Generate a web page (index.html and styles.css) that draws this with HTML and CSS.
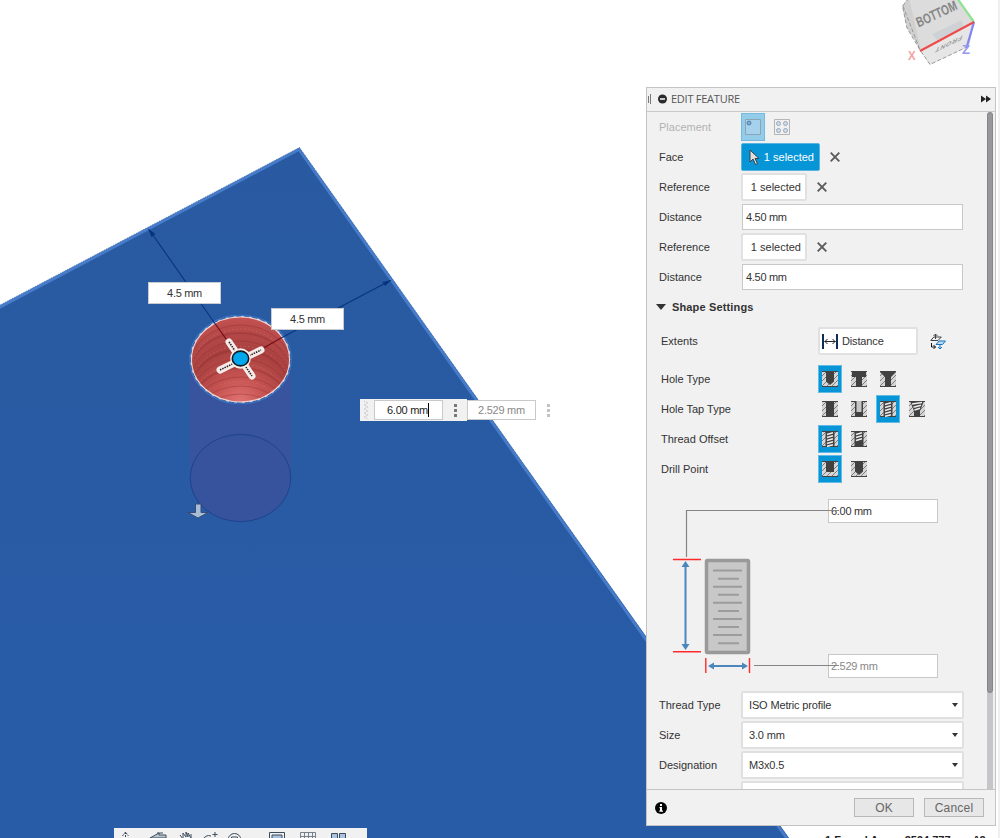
FILE: index.html
```html
<!DOCTYPE html>
<html lang="en">
<head>
<meta charset="utf-8">
<title>Edit Feature</title>
<link rel="stylesheet" href="styles.css">
</head>
<body>
<svg class="defs" width="0" height="0" aria-hidden="true">
  <defs>
    <pattern id="hatch" width="5" height="5" patternUnits="userSpaceOnUse">
      <rect width="5" height="5" fill="#d6d6d6"/>
      <path d="M-1 6 6-1M-1 1 1-1M4 6 6 4" stroke="#666" stroke-width=".8"/>
    </pattern>
    <symbol id="base" viewBox="0 0 16 16"><rect width="16" height="16" fill="url(#hatch)"/><path d="M0 .5h16M0 15.5h16" stroke="#444"/></symbol>
    <symbol id="simple" viewBox="0 0 16 16"><use href="#base"/><path d="M4 0h8v10.500L8 14 4 10.500z" fill="#414141"/></symbol>
    <symbol id="bore" viewBox="0 0 16 16"><use href="#base"/><path d="M1 0h14v6h-4v10H5V6H1z" fill="#414141"/></symbol>
    <symbol id="sink" viewBox="0 0 16 16"><use href="#base"/><path d="M0 0h16v1l-5 5v10H5V6L0 1z" fill="#414141"/></symbol>
    <symbol id="plain" viewBox="0 0 16 16"><use href="#base"/><path d="M4 0h8v16H4z" fill="#414141"/></symbol>
    <symbol id="clear" viewBox="0 0 16 16"><use href="#base"/><path d="M4 0h8v16H4z" fill="#414141"/><path d="M5.500 0h5v11h-5z" fill="#c6c6c6"/></symbol>
    <symbol id="tapped" viewBox="0 0 16 16"><use href="#base"/><path d="M3.500 0h9v16h-9z" fill="#414141"/><path d="M5 3.500 11 1.800M5 6.500 11 4.800M5 9.500 11 7.800M5 12.500 11 10.800M5 15.300 11 13.800" stroke="#eee" stroke-width="1.700"/></symbol>
    <symbol id="taper" viewBox="0 0 16 16"><use href="#base"/><path d="M1 0h14l-4 10v6H5v-6z" fill="#414141"/><path d="M3 3 13 1.500M4.500 6.200 12 4.200M5.500 9 11 7.200" stroke="#eee" stroke-width="1.600"/></symbol>
    <symbol id="offset" viewBox="0 0 16 16"><use href="#base"/><path d="M3.500 0h9v16h-9z" fill="#414141"/><path d="M5 3.500 11 1.800M5 6.500 11 4.800M5 9.500 11 7.800" stroke="#eee" stroke-width="1.700"/></symbol>
    <symbol id="flat" viewBox="0 0 16 16"><use href="#base"/><path d="M4 0h8v11H4z" fill="#414141"/></symbol>
    <symbol id="cross" viewBox="0 0 10 10"><path d="m.7.7 8.600 8.600M9.300.7.7 9.300" stroke="#5c5c5c" stroke-width="1.900"/></symbol>
    <radialGradient id="bowl" gradientUnits="userSpaceOnUse" cx="240" cy="402" r="92">
      <stop offset="0" stop-color="#e07372"/><stop offset=".28" stop-color="#c45250"/><stop offset=".58" stop-color="#a94140"/><stop offset=".8" stop-color="#b84a4a"/><stop offset="1" stop-color="#cb5858"/>
    </radialGradient>
    <linearGradient id="plate" x1="0" y1="0" x2="0" y2="1"><stop offset="0" stop-color="#295aa1"/><stop offset="1" stop-color="#285ca7"/></linearGradient>
    <clipPath id="mouth"><ellipse cx="240.500" cy="359.500" rx="48.500" ry="42"/></clipPath>
  </defs>
</svg>

<main class="viewport">
  <svg class="model" width="1000" height="838" viewBox="0 0 1000 838">
    <path d="M0 305.500 299.500 148 789 838H0z" fill="url(#plate)"/>
    <path d="M-2 308 299 149.500 788 840" fill="none" stroke="#467cca" stroke-width="3"/>
    <path d="M-2 306 299.500 147.500 790 840" fill="none" stroke="#315b98" stroke-width=".7" stroke-dasharray="1 1"/>
    <path d="M190 360h101v118a50.500 43.500 0 0 1-101 0z" fill="#39549e"/>
    <ellipse cx="240.500" cy="478" rx="50.300" ry="43.600" fill="#38539d" stroke="#1d438e"/>
    <ellipse cx="240.500" cy="359.500" rx="50.500" ry="44" fill="#285aa4" stroke="#3c79ca" stroke-width="1.500"/>
    <ellipse cx="240.500" cy="359.500" rx="49.200" ry="42.700" fill="url(#bowl)" stroke="#efd3d2" stroke-width="1.600"/>
    <ellipse cx="240.500" cy="359.500" rx="50" ry="43.500" fill="none" stroke="#1f4c93" stroke-width=".8" stroke-dasharray="5 3"/>
    <g clip-path="url(#mouth)" fill="none" stroke="#8d302f" stroke-opacity=".38">
      <ellipse cx="240.500" cy="368" rx="51" ry="43"/><ellipse cx="240.500" cy="376" rx="51" ry="43" stroke-width="2"/>
      <ellipse cx="240.500" cy="384" rx="51" ry="43"/><ellipse cx="240.500" cy="393" rx="51" ry="43" stroke-width="2"/>
      <ellipse cx="240.500" cy="402" rx="51" ry="43"/><ellipse cx="240.500" cy="411" rx="51" ry="43" stroke-width="2"/>
      <ellipse cx="240.500" cy="420" rx="51" ry="43"/><ellipse cx="240.500" cy="429" rx="51" ry="43"/><ellipse cx="240.500" cy="437" rx="51" ry="43"/>
      <g stroke="#e07b74" stroke-width=".7" stroke-dasharray="2 2" stroke-opacity=".6"><ellipse cx="240.500" cy="372" rx="49" ry="43"/><ellipse cx="240.500" cy="389" rx="49" ry="43"/><ellipse cx="240.500" cy="407" rx="49" ry="43"/><ellipse cx="240.500" cy="424" rx="49" ry="43"/></g>
    </g>
    <path d="M149 229.500 216 325M390.500 280.500 281 338" stroke="#0a347d" stroke-width="1.100"/>
    <path d="m216 325 13 18M281 338l-21 12" stroke="#740c19" stroke-width="1.200"/>
    <path d="m148 228.500 7.500 5.500-4 3zM391.500 280l-9 2 2.500 4z" fill="#06347e"/>
    <path d="m229 342 23 34M220 370l41-20" stroke="#f7ecea" stroke-width="7" stroke-linecap="round"/>
    <path d="m229 342 23 34M220 370l41-20" stroke="#222" stroke-width="1.600" stroke-dasharray="1.500 1"/>
    <circle cx="240.500" cy="358.500" r="10.300" fill="#f7ecea"/>
    <ellipse cx="240.500" cy="358.500" rx="8.200" ry="7.400" fill="#00a7ef" stroke="#161b20" stroke-width="1.600"/>
    <path d="M195.500 504h5.500v8.500h7L198 518l-10-5.500h7.500z" fill="#a9bdd7" stroke="#354d72" stroke-width="1"/>
  </svg>

  <div class="tag tag-left">4.5 mm</div>
  <div class="tag tag-right">4.5 mm</div>
  <div class="float-input">
    <span class="float-live"><svg width="5" height="20" viewBox="0 0 5 20"><path d="m0 1 4 2-4 2 4 2-4 2 4 2-4 2 4 2-4 2 4 2" fill="none" stroke="#bbb" stroke-dasharray="1 1"/></svg><span class="live-field">6.00 mm<i class="caret"></i></span><b class="dots"></b></span>
    <span class="idle-field">2.529 mm</span><b class="dots dots-idle"></b>
  </div>

  <svg class="viewcube" width="90" height="72" viewBox="895 0 90 72">
    <path d="M908-3 902.500 6l3 16.500 15 27.500 9.500 14.500L969 46l5-24L956-3z" fill="#dcdcdc"/>
    <path d="M902.500 6 909-2l12 52 9 14.500L907 28z" fill="#d0d0d0"/>
    <path d="M920 50 974 22l-5 24-39 18.500z" fill="#e6e6e6"/>
    <path d="m932 34 30-14 1 8-26 12z" fill="#cfd2d4"/>
    <path d="M909-2 902.500 6 907 28l13 22 10 14.500L969 46M903 6l17 44" fill="none" stroke="#999" stroke-dasharray="4 2"/>
    <text class="cube-face" transform="matrix(.9 -.42 .38 .92 918.500 27.500)" textLength="44" lengthAdjust="spacingAndGlyphs">BOTTOM</text>
    <text class="cube-front" transform="matrix(-.87 .43 .3 -.85 963 35)">FRONT</text>
    <path d="m957-2 17 24" stroke="#91e291" stroke-width="2.200"/>
    <path d="M974 22 966.500 48" stroke="#8383f1" stroke-width="2.200"/>
    <path d="m920 51 54-29" stroke="#ed4a4a" stroke-width="2"/>
    <text class="axis axis-x" x="908" y="60" textLength="7.500" lengthAdjust="spacingAndGlyphs">X</text>
    <text class="axis axis-z" x="962" y="54">Z</text>
  </svg>
  <div class="edge-strip"></div>

  <div class="navbar">
    <svg width="253" height="10" viewBox="114 828 253 10" fill="none" stroke="#3c4c5b">
      <path d="m122.500 836 3-4 3 4M125.500 832v7" stroke-dasharray="2 1"/>
      <path d="m150 838 9-5v2h7v3zM157 833h6" fill="#bbc7d0"/>
      <path d="m180 835 3 4v-6l3 4v-5l2 5v-4l3 5v-4" fill="#fff"/>
      <path d="M203 840a6 6 0 0 1 8-4M212.500 834.500h5M215 832v5"/>
      <path d="M228 840a6.500 6.500 0 0 1 13 0M231.500 840v-3h6v3"/>
      <path d="M269.500 832.500h15v8h-15z"/><path d="M272 835h10v6h-10z" fill="#a9c2e0"/>
      <path d="M300.500 832.500h15v8h-15zM304.500 832v8M308.500 832v8M312.500 832v8M300 836.500h16" stroke="#77818a"/>
      <path d="M331.500 833.500h6v6h-6zM339.500 833.500h6v6h-6z" fill="#a9c2e0"/>
    </svg>
  </div>
  <div class="status"><span>1 Found Area : 2594.777 mm^2</span></div>

  <section class="panel">
    <header class="panel-head">
      <svg width="22" height="12" viewBox="0 0 22 12"><path d="M.5 3v7M2.500 1v10" stroke="#777"/><circle cx="14.500" cy="6" r="4.500" fill="#2b2b2b"/><path d="M12 6h5" stroke="#fff" stroke-width="1.500"/></svg>
      <h1>EDIT FEATURE</h1>
      <svg class="expand" width="10" height="8" viewBox="0 0 10 8"><path d="m0 .5 5 3.500-5 3.500zM5 .5l5 3.500-5 3.500z" fill="#222"/></svg>
    </header>

    <div class="panel-body">
      <div class="scroll-content">
        <div class="row"><label class="muted">Placement</label><div class="controls">
          <span class="icon-btn pick"><svg width="16" height="16" viewBox="0 0 16 16"><path d="M.5.5h15v15H.5z" fill="#a5d1ec" stroke="#8aa5b3"/><circle cx="4" cy="4" r="2" fill="#78aedb" stroke="#587f9f"/></svg></span>
          <span class="icon-btn gap"><svg width="16" height="16" viewBox="0 0 16 16" fill="#cddded" stroke="#9aa8b5"><path d="M.5.5h15v15H.5z" fill="#f0f0f0" stroke="#b5b5b5"/><circle cx="4.500" cy="4.500" r="2"/><circle cx="11.500" cy="4.500" r="2"/><circle cx="4.500" cy="11.500" r="2"/><circle cx="11.500" cy="11.500" r="2"/></svg></span>
        </div></div>
        <div class="row"><label>Face</label><div class="controls"><span class="select-btn active"><svg width="11" height="17" viewBox="0 0 11 17"><path d="M1 1v12l3-3 2.500 5.500 2-1L6 9.500h4z" fill="#dedede" stroke="#38414a"/></svg>1 selected</span><svg class="clear-x" width="10" height="10"><use href="#cross"/></svg></div></div>
        <div class="row"><label>Reference</label><div class="controls"><span class="select-btn">1 selected</span><svg class="clear-x" width="10" height="10"><use href="#cross"/></svg></div></div>
        <div class="row"><label>Distance</label><div class="field">4.50 mm</div></div>
        <div class="row"><label>Reference</label><div class="controls"><span class="select-btn">1 selected</span><svg class="clear-x" width="10" height="10"><use href="#cross"/></svg></div></div>
        <div class="row"><label>Distance</label><div class="field">4.50 mm</div></div>
        <div class="section"><i class="tri"></i><h2>Shape Settings</h2></div>
        <div class="row wide extents"><label>Extents</label><div class="controls">
          <span class="extent-btn"><svg width="16" height="15" viewBox="0 0 16 15"><path d="M1 0v15M15 0v15" stroke="#102d59" stroke-width="2"/><path d="M2.500 7.500h11M5.500 5 3 7.500 5.500 10M10.500 5l2.500 2.500-2.500 2.500" fill="none" stroke="#222"/></svg>Distance</span>
          <svg class="flip" width="16" height="17" viewBox="0 0 16 17" fill="none"><path d="m.8 7.500 3-3.500h7.500L8 7.500zM5.500 6V1M3.500 3l2-2 2 2" stroke="#444"/><path d="m6 11.500 3-3.500h6.500l-3 3.500z" fill="#bad9f2" stroke="#1273c1"/><path d="M10 11v5m-2-2 2 2 2-2" stroke="#1273c1"/><path d="M1.500 10v4h4m-2-2 2 2-2 2" stroke="#111"/></svg>
        </div></div>
        <div class="row wide"><label>Hole Type</label><div class="controls icons">
          <span class="icon-btn on"><svg width="16" height="16"><use href="#simple"/></svg></span><span class="icon-btn"><svg width="16" height="16"><use href="#bore"/></svg></span><span class="icon-btn"><svg width="16" height="16"><use href="#sink"/></svg></span></div></div>
        <div class="row wide"><label>Hole Tap Type</label><div class="controls icons">
          <span class="icon-btn"><svg width="16" height="16"><use href="#plain"/></svg></span><span class="icon-btn"><svg width="16" height="16"><use href="#clear"/></svg></span><span class="icon-btn on"><svg width="16" height="16"><use href="#tapped"/></svg></span><span class="icon-btn"><svg width="16" height="16"><use href="#taper"/></svg></span></div></div>
        <div class="row wide"><label>Thread Offset</label><div class="controls icons">
          <span class="icon-btn on"><svg width="16" height="16"><use href="#tapped"/></svg></span><span class="icon-btn"><svg width="16" height="16"><use href="#offset"/></svg></span></div></div>
        <div class="row wide"><label>Drill Point</label><div class="controls icons">
          <span class="icon-btn on"><svg width="16" height="16"><use href="#flat"/></svg></span><span class="icon-btn"><svg width="16" height="16"><use href="#simple"/></svg></span></div></div>

        <div class="diagram">
          <div class="diagram-fields"><div class="field">6.00 mm</div><div class="field dim">2.529 mm</div></div>
          <svg class="drawing" width="200" height="206" viewBox="647 484 200 206" fill="none">
            <path d="M686.500 557v-46.500H839M754 665.500h85" stroke="#858585" stroke-width="1.200"/>
            <rect x="706.500" y="560.500" width="42" height="92" rx="1" fill="#c8c8c8" stroke="#999" stroke-width="3.500"/>
            <path d="M713 570.500h29M713 586.700h29M713 602.800h29M713 619h29M713 635h29M718 578.700h21M718 594.800h21M718 611h21M718 627h21M718 643.300h21" stroke="#9c9c9c" stroke-width="2"/>
            <path d="M673 559.500h28M673 651.800h28M705.800 658v15M749.500 658v15" stroke="#ff2b2b" stroke-width="1.400"/>
            <path d="M685.500 565v81M713 666h30" stroke="#4b86bd" stroke-width="2"/>
            <path d="m685.500 561-4 6h8zM685.500 650l-4-6h8zM708 666l6-3.500v7zM748 666l-6-3.500v7z" fill="#4b86bd"/>
          </svg>
        </div>

        <div class="row"><label>Thread Type</label><div class="drop">ISO Metric profile<i></i></div></div>
        <div class="row"><label>Size</label><div class="drop">3.0 mm<i></i></div></div>
        <div class="row"><label>Designation</label><div class="drop">M3x0.5<i></i></div></div>
        <div class="row"><label></label><div class="drop"></div></div>
      </div>
      <div class="scrollbar"><div class="thumb"></div></div>
    </div>

    <footer class="panel-foot">
      <svg width="12" height="12" viewBox="0 0 12 12"><circle cx="6" cy="6" r="6" fill="#050505"/><path d="M5 2h2v2H5zM4.500 5H7v3.500h1v1.200H4.300V8.500H5V6.200h-.5z" fill="#fff"/></svg>
      <div class="actions"><button>OK</button><button>Cancel</button></div>
    </footer>
  </section>
</main>
</body>
</html>
```
FILE: styles.css
```css
* { box-sizing: border-box; }
body { margin: 0; background: #fff; font: 11px/14px "Liberation Sans", Arial, sans-serif; letter-spacing: -.15px; color: #333; overflow: hidden; }
.defs { position: absolute; }
.viewport { position: relative; width: 1000px; height: 838px; overflow: hidden; }
svg { display: block; flex: none; }
.model { position: absolute; inset: 0; }

.tag { position: absolute; width: 73px; height: 22px; border: 1px solid #c8ccd2; background: #fff; text-align: center; line-height: 21px; letter-spacing: -.3px; }
.tag-left { left: 148px; top: 282px; }
.tag-right { left: 271px; top: 308px; }
.float-input { position: absolute; left: 360px; top: 399px; display: flex; align-items: center; height: 22px; letter-spacing: -.25px; }
.float-live { display: flex; align-items: center; width: 107px; height: 22px; padding-left: 4px; background: #f1f1f1; }
.live-field { display: flex; align-items: center; justify-content: flex-end; width: 69px; height: 20px; margin-left: 5px; padding-right: 13px; border: 1px solid #c9c9c9; background: #fff; color: #222; }
.caret { width: 1px; height: 14px; background: #000; }
.idle-field { width: 69px; height: 20px; border: 1px solid #c9c9c9; background: #fff; color: #888; text-align: center; line-height: 19px; }
.dots { width: 3px; height: 14px; margin-left: 11px; background: radial-gradient(circle, #777 1.4px, transparent 1.7px) 0 0 / 3px 5px; }
.dots-idle { opacity: .45; }

.viewcube { position: absolute; left: 895px; top: 0; }
.cube-face { font: bold 14px "Liberation Sans", sans-serif; letter-spacing: 0; fill: #858585; }
.cube-front { font: bold 8px "Liberation Sans", sans-serif; fill: #999; letter-spacing: .8px; }
.axis { font: bold 13px "Liberation Sans", sans-serif; }
.axis-x { fill: #f3a2a2; }
.axis-z { fill: #9696ee; }
.edge-strip { position: absolute; left: 998px; top: 0; width: 2px; height: 838px; background: #f0f0f0; }
.navbar { position: absolute; left: 114px; top: 828px; width: 253px; height: 10px; background: #f1f1f1; overflow: hidden; }
.status { position: absolute; left: 825px; top: 834px; width: 172px; height: 4px; overflow: hidden; font-weight: bold; line-height: 12px; letter-spacing: 0; white-space: nowrap; color: #222; }

.panel { position: absolute; left: 646px; top: 87px; width: 350px; height: 739px; display: flex; flex-direction: column; border: 1px solid #c4c4c4; background: #f1f1f1; }
.panel-head { display: flex; align-items: center; height: 24px; border-bottom: 1px solid #c9c9c9; padding: 0 4px 2px 1px; }
.panel-head h1 { margin: 0 0 0 1px; font: 11px/14px "Open Sans", "Noto Sans", sans-serif; letter-spacing: -.25px; color: #555; }
.expand { margin-left: auto; }
.panel-body { display: flex; height: 678px; border-bottom: 1px solid #c4c4c4; overflow: hidden; }
.scroll-content { width: 340px; }
.scrollbar { width: 6px; height: 677px; background: #c5c6c8; border-radius: 3px 3px 0 0; }
.thumb { width: 6px; height: 581px; border-radius: 3px; background: #98989b; border: 1px solid #858588; }

.row { display: grid; grid-template-columns: 82px 223px; align-items: center; height: 30px; padding-left: 12px; }
.row.wide { grid-template-columns: 159px 145px; }
.wide label { padding-left: 2px; }
.row.extents { height: 38px; margin-bottom: 4px; }
.row label { white-space: nowrap; letter-spacing: 0; }
.muted { color: #b3b3b3; }
.controls { display: flex; align-items: center; }
.icons { gap: 5px; }
.icon-btn { display: flex; align-items: center; justify-content: center; width: 24px; height: 28px; }
.icons .icon-btn { padding-right: 1px; }
.icon-btn.on { background: #0696d7; border: 1px solid #63bae3; }
.icon-btn.pick { background: #93cce9; border: 1px solid #74bbdf; }
.icon-btn.gap { margin-left: 5px; }
.select-btn { display: flex; align-items: center; justify-content: flex-end; width: 66px; height: 28px; padding-right: 4px; border: 2px solid #e1e1e1; border-radius: 2px; background: #fff; letter-spacing: 0; }
.select-btn.active { width: 79px; gap: 4px; padding-right: 5px; background: #0696d7; border: 1px solid #58b3df; color: #fff; }
.clear-x { margin-left: 10px; }
.field { height: 26px; border: 1px solid #c8c8c8; background: #fff; padding-left: 3px; line-height: 24px; letter-spacing: -.3px; }
.row .field { margin: 0 1px 0 1px; }
.section { display: flex; align-items: center; height: 30px; padding-left: 9px; }
.tri { border: 5px solid transparent; border-top: 6px solid #333; border-bottom: 0; }
.section h2 { margin: 0 0 0 6px; font-size: 11px; letter-spacing: .15px; }
.extent-btn { display: flex; align-items: center; gap: 4px; width: 100px; height: 28px; border: 2px solid #e1e1e1; border-radius: 2px; background: #fff; padding-left: 2px; }
.flip { margin-left: 12px; }
.diagram { display: grid; height: 206px; }
.diagram > * { grid-area: 1 / 1; }
.diagram-fields { display: flex; flex-direction: column; gap: 131px; width: 110px; margin: 15px 0 0 181px; }
.diagram-fields .field { height: 24px; line-height: 23px; padding-left: 2px; }
.dim { color: #888; }
.drawing { z-index: 1; }
.drop { display: flex; align-items: center; justify-content: space-between; height: 28px; padding: 0 4px 0 6px; border: 2px solid #e0e0e0; border-radius: 2px; background: #fff; }
.drop i { border: 3px solid transparent; border-top: 4px solid #333; border-bottom: 0; }
.panel-foot { display: flex; align-items: center; justify-content: space-between; height: 35px; padding: 0 11px 0 8px; }
.actions { display: flex; gap: 10px; }
.actions button { width: 60px; height: 19px; padding: 0; border: 1px solid #b8b8b8; background: #e7e7e7; color: #666; font: 12px/16px "Liberation Sans", sans-serif; letter-spacing: .2px; }
```
